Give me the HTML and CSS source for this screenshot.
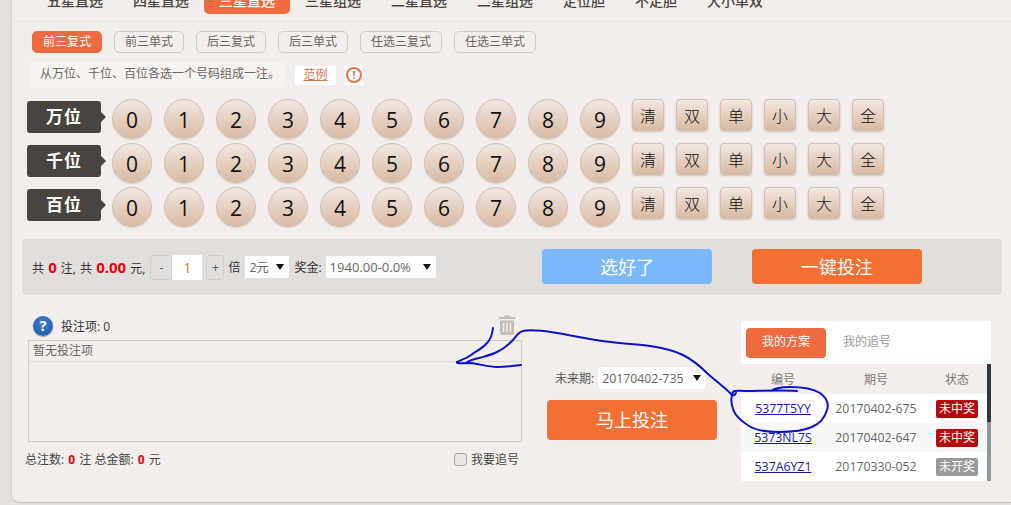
FILE: index.html
```html
<!doctype html>
<html lang="zh-CN">
<head>
  <title>三星直选</title>
  <meta charset="utf-8" />
  <meta name="viewport" content="width=device-width,initial-scale=1" />

  <link rel="stylesheet" href="styles.css">
</head>
<body>
  <main class="panel">
    <nav class="tabs">
      <a>五星直选</a>
      <a>四星直选</a>
      <a class="on">三星直选</a>
      <a>三星组选</a>
      <a>二星直选</a>
      <a>二星组选</a>
      <a>定位胆</a>
      <a>不定胆</a>
      <a>大小单双</a>
    </nav>

    <div class="subtabs">
      <a class="on">前三复式</a>
      <a>前三单式</a>
      <a>后三复式</a>
      <a>后三单式</a>
      <a class="wide">任选三复式</a>
      <a class="wide">任选三单式</a>
    </div>

    <div class="hint">
      <p>从万位、千位、百位各选一个号码组成一注。</p>
      <a class="sample">范例</a>
      <span class="alert"><i>!</i></span>
    </div>

    <div class="picker">
      <div class="row">
        <div class="place">万位</div>
        <div class="balls">
          <button>0</button><button>1</button><button>2</button><button>3</button><button>4</button>
          <button>5</button><button>6</button><button>7</button><button>8</button><button>9</button>
        </div>
        <div class="quick">
          <button>清</button><button>双</button><button>单</button><button>小</button><button>大</button><button>全</button>
        </div>
      </div>
      <div class="row">
        <div class="place">千位</div>
        <div class="balls">
          <button>0</button><button>1</button><button>2</button><button>3</button><button>4</button>
          <button>5</button><button>6</button><button>7</button><button>8</button><button>9</button>
        </div>
        <div class="quick">
          <button>清</button><button>双</button><button>单</button><button>小</button><button>大</button><button>全</button>
        </div>
      </div>
      <div class="row">
        <div class="place">百位</div>
        <div class="balls">
          <button>0</button><button>1</button><button>2</button><button>3</button><button>4</button>
          <button>5</button><button>6</button><button>7</button><button>8</button><button>9</button>
        </div>
        <div class="quick">
          <button>清</button><button>双</button><button>单</button><button>小</button><button>大</button><button>全</button>
        </div>
      </div>
    </div>

    <div class="betbar">
      <div class="summary">
        <span class="totals">共 <b>0</b> 注, 共 <b>0.00</b> 元,</span>
        <div class="stepper">
          <button class="minus">-</button>
          <input type="text" value="1" />
          <button class="plus">+</button>
        </div>
        <span class="times">倍</span>
        <label class="select unit"><select><option>2元</option></select></label>
        <span class="prize-label">奖金:</span>
        <label class="select prize"><select><option>1940.00-0.0%</option></select></label>
      </div>
      <button class="big blue">选好了</button>
      <button class="big orange">一键投注</button>
    </div>

    <div class="lower">
      <section class="slip">
        <div class="slip-head">
          <span class="help">?</span>
          <span class="slip-count">投注项: 0</span>
          <svg class="trash" width="20" height="22" viewBox="0 0 20 22">
            <path d="M7 3V1.500h6V3h5.500v2H1.500V3z" fill="#c4bdb7" />
            <path d="M3 6.500h14V19q0 2-2 2H5q-2 0-2-2z" fill="#c4bdb7" />
            <path d="M6.500 9v9M10 9v9M13.500 9v9" stroke="#f3eeec" stroke-width="1.500" />
          </svg>
        </div>
        <div class="slip-box">
          <div class="slip-empty">暂无投注项</div>
        </div>
        <div class="slip-foot">
          <span>总注数: <b>0</b> 注 总金额: <b>0</b> 元</span>
          <label class="chase"><input type="checkbox" />我要追号</label>
        </div>
      </section>

      <section class="submit">
        <div class="future">
          <span>未来期:</span>
          <label class="select period"><select><option>20170402-735</option></select></label>
        </div>
        <button class="big orange now">马上投注</button>
      </section>

      <section class="plans">
        <div class="plan-tabs">
          <a class="on">我的方案</a>
          <a>我的追号</a>
        </div>
        <div class="plan-scroll">
          <table>
            <thead>
              <tr><th class="c1">编号</th><th class="c2">期号</th><th class="c3">状态</th></tr>
            </thead>
            <tbody>
              <tr><td><a>5377T5YY</a></td><td>20170402-675</td><td><span class="tag lost">未中奖</span></td></tr>
              <tr><td><a>5373NL7S</a></td><td>20170402-647</td><td><span class="tag lost">未中奖</span></td></tr>
              <tr><td><a>537A6YZ1</a></td><td>20170330-052</td><td><span class="tag wait">未开奖</span></td></tr>
            </tbody>
          </table>
          <div class="scrollbar"><i></i></div>
        </div>
      </section>
    </div>
  </main>

  <!-- hand drawn annotation on top of the screenshot -->
  <svg class="scribble" width="1011" height="505" viewBox="0 0 1011 505">
    <path d="M493 328C492 336 490 340 487 343C482 349 476 351 471 355C466 359 460 360 457 362C456 364 464 363 471 363C480 364 488 367 497 367C505 367 512 366 521 365" />
    <path d="M466 363C470 360 474 359 479 358C486 356 491 355 497 352C504 349 508 345 512 341C516 337 518 332 523 331C532 329 544 331 557 333C575 336 592 340 611 342C625 344 638 344 650 346C663 348 673 350 683 355C693 360 701 367 708 374C716 381 724 387 729 392C732 395 734 397 736 393" />
    <path d="M771 391C775 388 780 387 790 387C800 387 812 388 820 393C827 398 829 404 827 410C825 417 821 423 812 427C803 431 790 432 779 432C768 432 757 431 749 426C741 421 735 416 733 409C731 403 731 396 733 392C735 390 738 391 745 391C760 391 780 390 797 391" />
  </svg>
</body>
</html>
```
FILE: styles.css
```css
* {
  box-sizing: border-box;
}

html,
body {
  margin: 0;
  padding: 0;
  height: 505px;
  overflow: hidden;
}

body {
  position: relative;
  background: #e4e0dc;
  color: #333;
  font-family: "Open Sans", "Noto Sans CJK SC", sans-serif;
  font-size: 12px;
}

p {
  margin: 0;
}

button,
input,
select {
  font-family: inherit;
  padding: 0;
}

.panel {
  margin: -12px 0 0 12px;
  height: 515px;
  background: #f3eeec;
  border-bottom: 1px solid #c9c4c0;
  border-radius: 0 0 0 8px;
  box-shadow: -1px 0 1px #d6d1cd;
}

/* top tabs, cut by the window edge */
.tabs {
  display: flex;
  height: 34px;
  padding-left: 20px;
  border-bottom: 1px solid #ebe5e2;
}

.tabs a {
  height: 26px;
  padding: 0 15px;
  font-size: 14px;
  font-weight: 500;
  line-height: 26px;
  color: #4a4441;
  border-radius: 0 0 5px 5px;
}

.tabs a.on {
  background: #ef6b3f;
  color: #fff;
}

.subtabs {
  display: flex;
  gap: 12px;
  margin: 9px 0 0 20px;
}

.subtabs a {
  width: 70px;
  height: 22px;
  border: 1px solid #cfcac6;
  border-radius: 5px;
  color: #6b6561;
  line-height: 19px;
  text-align: center;
}

.subtabs a.wide {
  width: 82px;
}

.subtabs a.on {
  background: #ef6b3f;
  border-color: #ef6b3f;
  color: #fff;
}

.hint {
  display: flex;
  align-items: center;
  height: 26px;
  margin: 9px 0 0 17px;
}

.hint p {
  width: 256px;
  height: 26px;
  padding-left: 11px;
  background: #f7f3f1;
  border-radius: 3px;
  color: #6b6561;
  line-height: 24px;
}

.sample {
  width: 41px;
  height: 19px;
  margin-left: 10px;
  background: #fff;
  color: #d9704c;
  line-height: 18px;
  text-align: center;
  text-decoration: underline;
}

.alert {
  display: flex;
  align-items: center;
  justify-content: center;
  width: 18px;
  height: 19px;
  margin-left: 9px;
  background: #fff;
}

.alert i {
  width: 16px;
  height: 16px;
  border: 2px solid #e4734e;
  border-radius: 50%;
  color: #e4734e;
  font-size: 11px;
  font-style: normal;
  font-weight: 700;
  line-height: 12px;
  text-align: center;
}

.picker {
  display: flex;
  flex-direction: column;
  gap: 4px;
  margin: 11px 0 0 15px;
}

.row {
  display: flex;
}

.place {
  position: relative;
  width: 74px;
  height: 32px;
  margin: 2px 11px 0 0;
  background: #4a4441;
  border-radius: 3px;
  color: #fff;
  font-size: 17px;
  font-weight: 700;
  letter-spacing: 1px;
  line-height: 32px;
  text-align: center;
}

.place::after {
  content: "";
  position: absolute;
  top: 11px;
  left: 100%;
  border: 5px solid transparent;
  border-left-color: #4a4441;
  border-right-width: 0;
}

.balls,
.quick {
  display: flex;
  gap: 12px;
}

.quick {
  margin-left: 12px;
}

.balls button,
.quick button {
  background: linear-gradient(#f1e8e0, #d9baa2);
  border: 1px solid #d0bfb2;
  color: #111;
}

.balls button {
  width: 40px;
  height: 40px;
  padding-top: 3px;
  border-radius: 50%;
  box-shadow: 0 1px 1px #d8d0ca;
  font-size: 21px;
  line-height: 1;
}

.quick button {
  width: 32px;
  height: 32px;
  padding-top: 2px;
  border-radius: 4px;
  box-shadow: 0 1px 2px #c9bfb7;
  font-size: 16px;
  font-weight: 300;
  line-height: 1;
}

.betbar {
  display: flex;
  align-items: center;
  width: 980px;
  height: 56px;
  margin: 12px 0 0 10px;
  background: #e2dedb;
  border-radius: 4px;
}

.summary {
  display: flex;
  align-items: center;
  width: 520px;
  padding-left: 10px;
  white-space: nowrap;
}

.totals {
  word-spacing: 1px;
}

.summary b,
.slip-foot b {
  color: #e60012;
  font-weight: 700;
}

.summary b {
  font-size: 15px;
}

.stepper {
  display: flex;
  margin-left: 5px;
}

.stepper button {
  height: 25px;
  background: #e2dedb;
  border: 1px solid #d3cecb;
  color: #555;
  font-size: 12px;
}

.minus {
  width: 22px;
  border-radius: 4px 0 0 4px;
}

.plus {
  width: 18px;
  margin-left: 4px;
  border-radius: 4px;
}

.stepper input {
  width: 30px;
  height: 25px;
  background: #fff;
  border: 0;
  color: #e4734e;
  font-size: 14px;
  text-align: center;
}

.times {
  margin-left: 4px;
}

.select {
  position: relative;
  display: block;
  height: 22px;
  background: #fff;
}

.select select {
  display: block;
  width: 100%;
  height: 100%;
  padding-left: 4px;
  appearance: none;
  background: transparent;
  border: 0;
  color: #666;
  font-size: 12.300px;
}

.select::after {
  content: "";
  position: absolute;
  top: 8px;
  right: 5px;
  border: 4px solid transparent;
  border-top: 6px solid #111;
  border-bottom-width: 0;
}

.unit {
  width: 44px;
  margin-left: 5px;
}

.prize-label {
  margin-left: 5px;
}

.prize {
  width: 110px;
  margin-left: 4px;
}

.prize select {
  font-size: 13px;
}

.big {
  width: 170px;
  height: 35px;
  margin-top: -1px;
  padding-bottom: 2px;
  border: 0;
  border-radius: 4px;
  color: #fff;
  font-size: 18px;
}

.blue {
  background: #7ab8fb;
}

.orange {
  margin-left: 40px;
  background: #f46f32;
}

.lower {
  display: flex;
  align-items: flex-start;
  margin: 21px 0 0 13px;
}

.slip {
  width: 497px;
}

.slip-head {
  display: flex;
  align-items: center;
  height: 24px;
  padding: 0 0 4px 8px;
}

.help {
  width: 20px;
  height: 20px;
  background: radial-gradient(circle at 50% 35%, #3f80cf, #1a55a3);
  border-radius: 50%;
  box-shadow: 0 1px 1px #999;
  color: #fff;
  font-size: 14px;
  font-weight: 700;
  line-height: 20px;
  text-align: center;
}

.slip-count {
  margin-left: 8px;
}

.trash {
  margin: -3px 5px 0 auto;
}

.slip-box {
  height: 102px;
  margin-left: 3px;
  border: 1px solid #cfcac6;
}

.slip-empty {
  height: 21px;
  padding-left: 4px;
  border-bottom: 1px solid #dfdad7;
  color: #6b6561;
  line-height: 20px;
}

.slip-foot {
  display: flex;
  justify-content: space-between;
  align-items: center;
  margin-top: 8px;
  color: #444;
}

.slip-foot b {
  margin: 0 1px;
}

.chase {
  display: flex;
  align-items: center;
  margin-right: 3px;
}

.chase input {
  width: 13px;
  height: 13px;
  margin: 0 4px 0 0;
  appearance: none;
  background: #e9e6e4;
  border: 1px solid #aaa5a1;
  border-radius: 3px;
}

.submit {
  width: 170px;
  margin: 51px 0 0 25px;
}

.future {
  display: flex;
  align-items: center;
  padding-left: 8px;
  color: #555;
}

.period {
  width: 108px;
  margin-left: 4px;
  border-radius: 3px;
  box-shadow: 0 0 1px #bbb;
}

.now {
  display: block;
  height: 40px;
  margin: 11px 0 0;
  font-size: 18px;
}

.plans {
  width: 250px;
  margin: 5px 0 0 24px;
  background: #fff;
}

.plan-tabs {
  display: flex;
  align-items: center;
  height: 43px;
  padding-left: 5px;
}

.plan-tabs a {
  width: 80px;
  height: 30px;
  margin-right: 1px;
  color: #999;
  line-height: 28px;
  text-align: center;
}

.plan-tabs a.on {
  background: #ef6b3f;
  border-radius: 4px;
  color: #fff;
}

.plan-scroll {
  display: flex;
}

table {
  width: 246px;
  border-collapse: collapse;
  table-layout: fixed;
  font-size: 12.300px;
  text-align: center;
}

.c1 {
  width: 84px;
}

.c2 {
  width: 102px;
}

th {
  height: 30px;
  background: #f3eeec;
  color: #7d7773;
  font-size: 12px;
  font-weight: 400;
}

td {
  height: 29px;
  padding: 0;
  color: #666;
}

tbody tr:nth-child(2) {
  background: #f8f8f8;
}

td a {
  color: #1a1aa6;
  text-decoration: underline;
}

.tag {
  display: block;
  width: 42px;
  height: 18px;
  margin: 0 0 0 9px;
  border-radius: 2px;
  color: #fff;
  font-size: 12px;
  line-height: 17px;
}

.lost {
  background: #b50a0a;
}

.wait {
  background: #999;
}

.scrollbar {
  width: 4px;
  background: #8f969d;
}

.scrollbar i {
  display: block;
  height: 58px;
  background: #2f3640;
}

/* annotation lies over everything */
.scribble {
  position: absolute;
  top: 0;
  left: 0;
  pointer-events: none;
}

.scribble path {
  fill: none;
  stroke: #0a12c8;
  stroke-width: 2;
  stroke-linecap: round;
}
```
